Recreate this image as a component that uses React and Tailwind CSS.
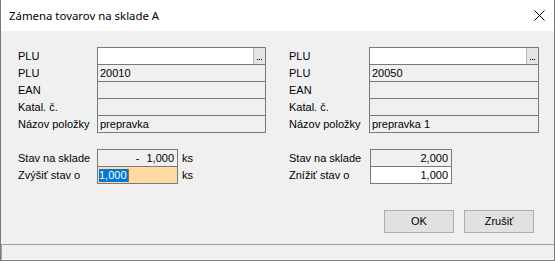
import React from "react";

function Dots() {
  return (
    <div className="w-[12px] h-full bg-[#e5e5e5] border-l border-[#b4b4b4] flex items-end justify-center gap-[1px] pb-[4px]">
      <span className="w-px h-px bg-black" />
      <span className="w-px h-px bg-black" />
      <span className="w-px h-px bg-black" />
    </div>
  );
}

function Row({ label, labelW, boxW, first, children, box = "bg-[#f0f0f0]" }) {
  return (
    <div className={"flex h-[18px] " + (first ? "" : "-mt-px")}>
      <div className={"flex items-center " + labelW}>{label}</div>
      <div className={"flex items-center border border-[#7a7a7a] " + boxW + " " + box}>{children}</div>
    </div>
  );
}

function Column({ labelW, boxW, plu, name }) {
  return (
    <div className="flex flex-col">
      <div className="flex h-[18px]">
        <div className={"flex items-center " + labelW}>PLU</div>
        <div className={"flex items-stretch justify-end border border-[#7a7a7a] bg-white " + boxW}>
          <Dots />
        </div>
      </div>
      <Row label="PLU" labelW={labelW} boxW={boxW}>
        <span className="pl-[2px]">{plu}</span>
      </Row>
      <Row label="EAN" labelW={labelW} boxW={boxW} />
      <Row label="Katal. č." labelW={labelW} boxW={boxW} />
      <Row label="Názov položky" labelW={labelW} boxW={boxW}>
        <span className="pl-[2px]">{name}</span>
      </Row>
    </div>
  );
}

export default function App() {
  return (
    <div className="w-[555px] h-[261px] flex flex-col border-x border-b border-[#7a7a7a] bg-[#f0f0f0] font-['Liberation_Sans',Arial,sans-serif] text-[11px] text-black leading-none">
      <div className="h-[31px] shrink-0 bg-white flex items-center justify-between pl-[8px] pr-[9px] font-['Segoe_UI','Noto_Sans',sans-serif] text-[11.4px]">
        <span>Zámena tovarov na sklade A</span>
        <svg width="11" height="11" viewBox="0 0 11 11">
          <path d="M0.5 0.5 L10.5 10.5 M10.5 0.5 L0.5 10.5" stroke="#000" strokeWidth="1" fill="none" />
        </svg>
      </div>
      <div className="flex-1 flex flex-col">
        <div className="pt-[16px] pl-[17px] flex gap-[23px]">
          <div className="flex flex-col">
            <Column labelW="w-[79px]" boxW="w-[169px]" plu="20010" name="prepravka" />
            <div className="mt-[16px] flex flex-col">
              <div className="flex h-[18px]">
                <div className="w-[79px] flex items-center">Stav na sklade</div>
                <div className="w-[81px] border border-[#7a7a7a] flex items-center justify-end pr-[3px]">
                  <span className="mr-[7px]">-</span>
                  <span>1,000</span>
                </div>
                <div className="ml-[4px] flex items-center">ks</div>
              </div>
              <div className="flex h-[18px] -mt-px">
                <div className="w-[79px] flex items-center">Zvýšiť stav o</div>
                <div className="w-[81px] border border-[#7a7a7a] bg-[#ffdba3] flex items-center pl-px">
                  <span className="bg-[#0078d7] text-white h-[13px] flex items-center pr-[1px]">1,000</span>
                  <span className="w-px h-[13px] bg-[#c06010]" />
                </div>
                <div className="ml-[4px] flex items-center">ks</div>
              </div>
            </div>
          </div>
          <div className="flex flex-col">
            <Column labelW="w-[80px]" boxW="w-[170px]" plu="20050" name="prepravka 1" />
            <div className="mt-[16px] flex flex-col">
              <div className="flex h-[18px]">
                <div className="w-[81px] flex items-center">Stav na sklade</div>
                <div className="w-[82px] border border-[#7a7a7a] flex items-center justify-end pr-[3px]">
                  2,000
                </div>
              </div>
              <div className="flex h-[18px] -mt-px">
                <div className="w-[81px] flex items-center">Znížiť stav o</div>
                <div className="w-[82px] border border-[#7a7a7a] bg-white flex items-center justify-end pr-[3px]">
                  1,000
                </div>
              </div>
            </div>
          </div>
        </div>
        <div className="mt-[26px] flex justify-end gap-[10px] pr-[20px]">
          <button className="w-[70px] h-[23px] border border-[#adadad] bg-[#e1e1e1] flex items-center justify-center">OK</button>
          <button className="w-[70px] h-[23px] border border-[#adadad] bg-[#e1e1e1] flex items-center justify-center">Zrušiť</button>
        </div>
        <div className="mt-auto h-[16px] border-t border-l border-b border-t-[#a0a0a0] border-l-[#a0a0a0] border-b-white" />
      </div>
    </div>
  );
}
